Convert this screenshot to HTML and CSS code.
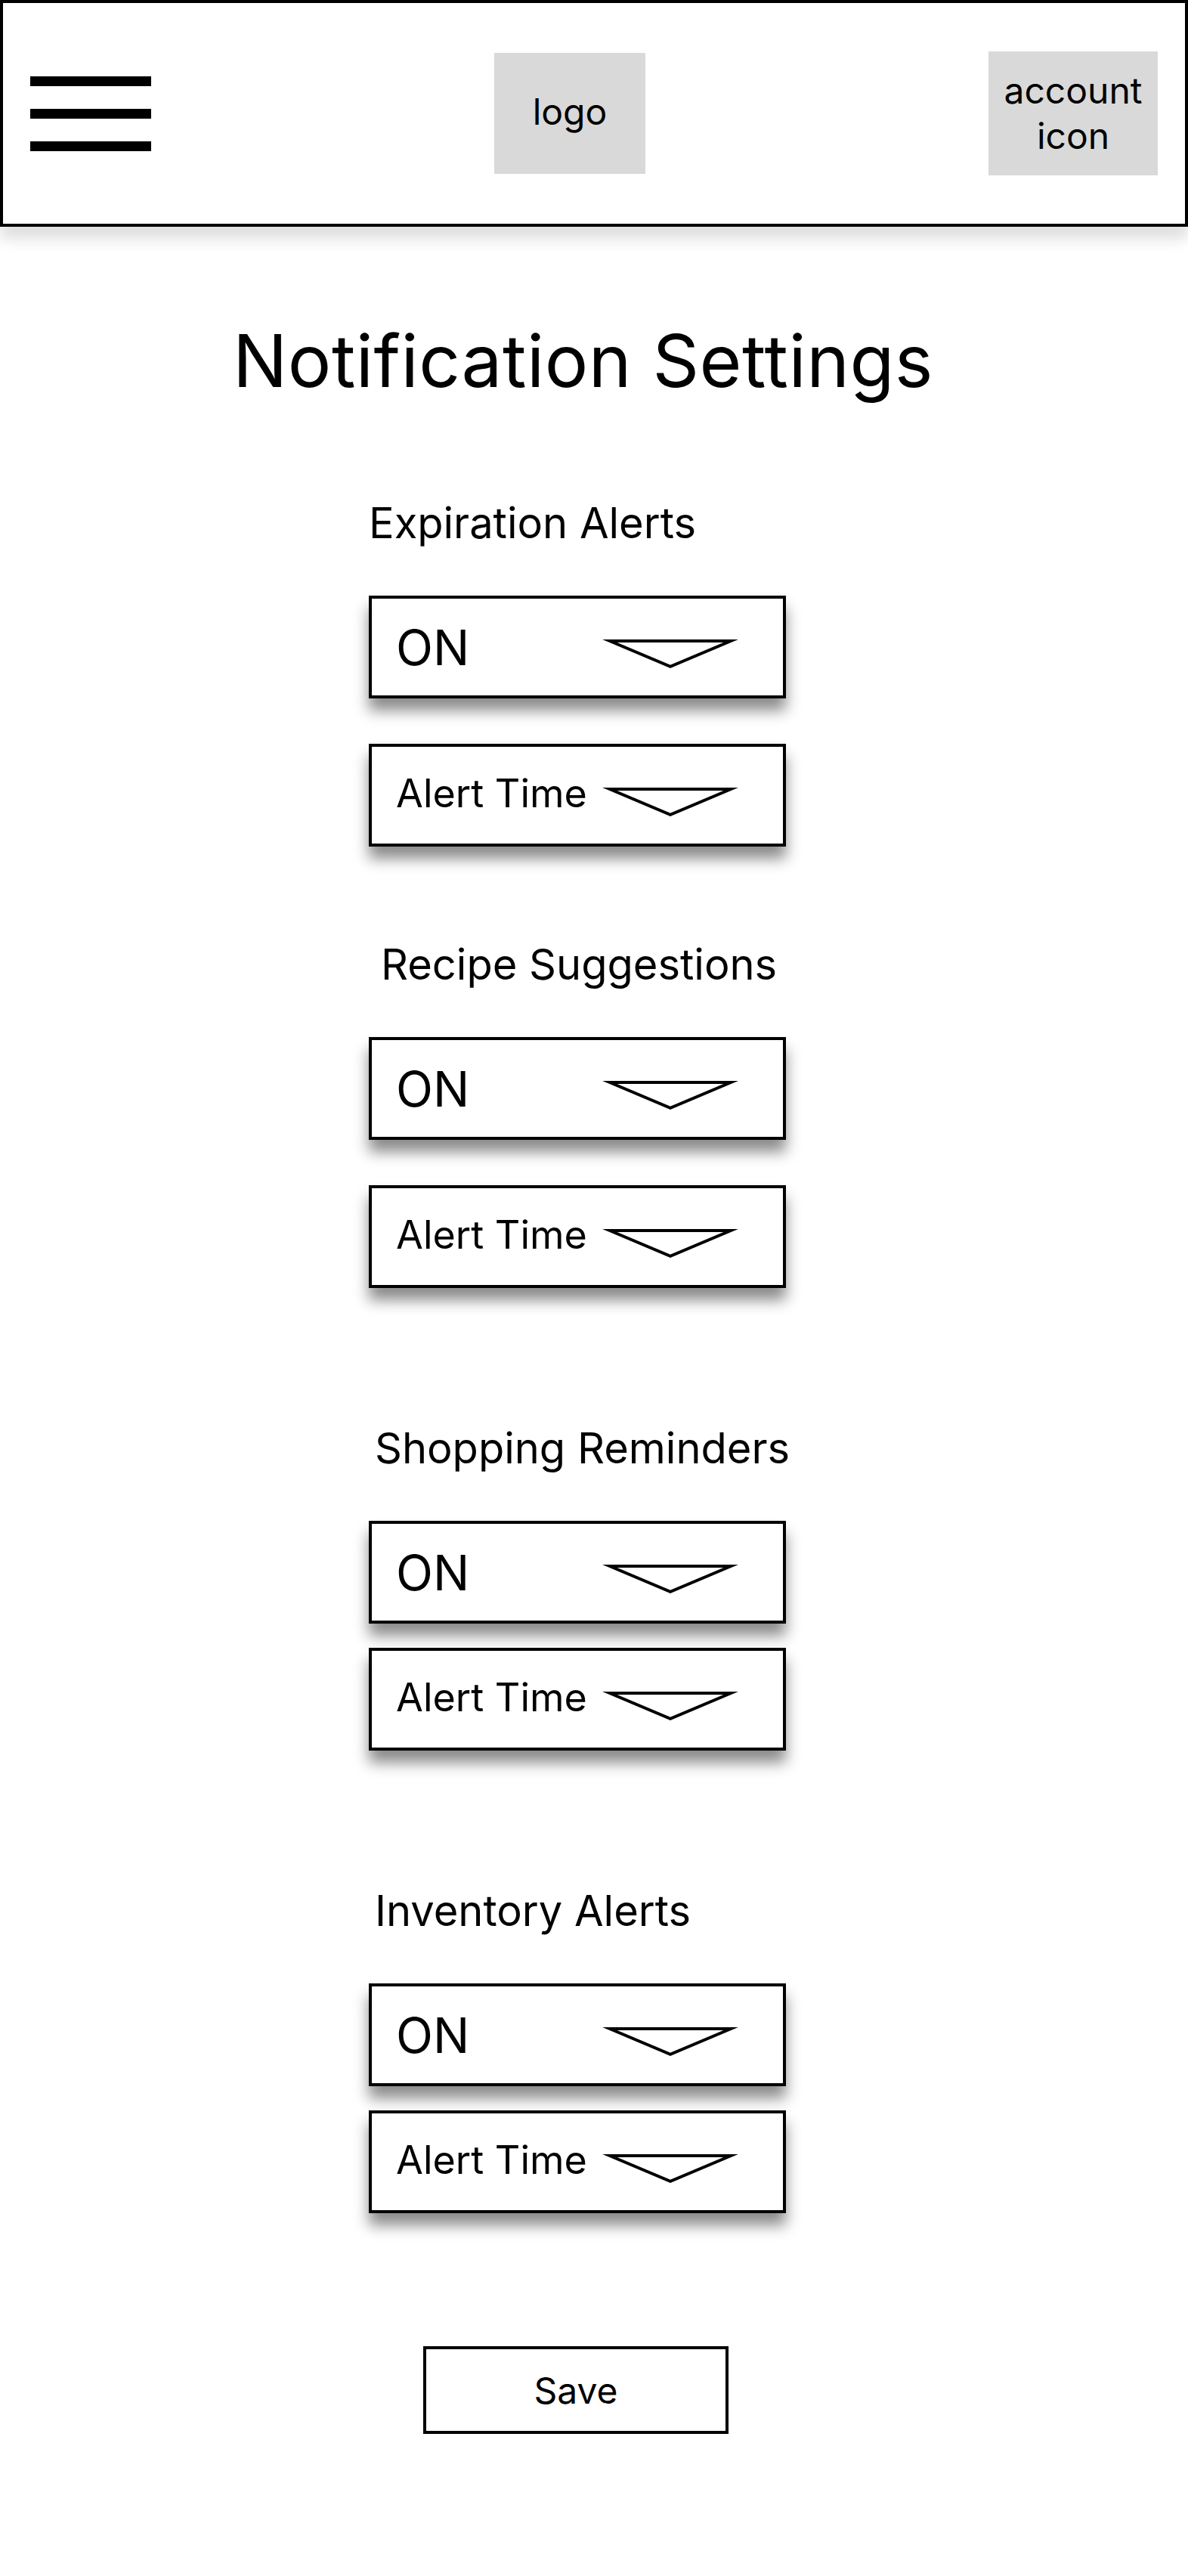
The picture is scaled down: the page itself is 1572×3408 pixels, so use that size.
FILE: index.html
```html
<!DOCTYPE html>
<html lang="en">
<head>
<meta charset="UTF-8" />
<meta name="viewport" content="width=device-width, initial-scale=1" />
<title>Notification Settings</title>
<link rel="stylesheet" href="styles.css">
</head>
<body>

<header class="topbar">
  <div class="burger"><span></span><span></span><span></span></div>
  <div class="logo">logo</div>
  <div class="account">account<br>icon</div>
</header>

<h1 class="page-title">Notification Settings</h1>

<main class="settings">
  <section class="group group-expiration">
    <h2 class="group-label">Expiration Alerts</h2>
    <div class="dropdown">
      <span class="value-on">ON</span>
      <svg class="caret" viewBox="0 0 180 38"><polygon points="10,2 170,2 90,35.8" /></svg>
    </div>
    <div class="dropdown">
      <span class="value-time">Alert Time</span>
      <svg class="caret" viewBox="0 0 180 38"><polygon points="10,2 170,2 90,35.8" /></svg>
    </div>
  </section>

  <section class="group group-recipe">
    <h2 class="group-label">Recipe Suggestions</h2>
    <div class="dropdown">
      <span class="value-on">ON</span>
      <svg class="caret" viewBox="0 0 180 38"><polygon points="10,2 170,2 90,35.8" /></svg>
    </div>
    <div class="dropdown">
      <span class="value-time">Alert Time</span>
      <svg class="caret" viewBox="0 0 180 38"><polygon points="10,2 170,2 90,35.8" /></svg>
    </div>
  </section>

  <section class="group group-shopping tight">
    <h2 class="group-label">Shopping Reminders</h2>
    <div class="dropdown">
      <span class="value-on">ON</span>
      <svg class="caret" viewBox="0 0 180 38"><polygon points="10,2 170,2 90,35.8" /></svg>
    </div>
    <div class="dropdown">
      <span class="value-time">Alert Time</span>
      <svg class="caret" viewBox="0 0 180 38"><polygon points="10,2 170,2 90,35.8" /></svg>
    </div>
  </section>

  <section class="group group-inventory tight">
    <h2 class="group-label">Inventory Alerts</h2>
    <div class="dropdown">
      <span class="value-on">ON</span>
      <svg class="caret" viewBox="0 0 180 38"><polygon points="10,2 170,2 90,35.8" /></svg>
    </div>
    <div class="dropdown">
      <span class="value-time">Alert Time</span>
      <svg class="caret" viewBox="0 0 180 38"><polygon points="10,2 170,2 90,35.8" /></svg>
    </div>
  </section>

  <button class="save-btn">Save</button>
</main>

</body>
</html>
```
FILE: styles.css
```css
* {
  box-sizing: border-box;
}
body {
  margin: 0;
  background: #fff;
  color: #000;
  font-family: Inter, "Liberation Sans", sans-serif;
  font-optical-sizing: none;
}

/* header */
.topbar {
  height: 300px;
  display: flex;
  align-items: center;
  justify-content: space-between;
  padding: 0 36px;
  border: 4px solid #000;
  box-shadow: 0 16px 18px rgba(0,0,0,0.13);
}
.burger {
  width: 160px;
  display: flex;
  flex-direction: column;
  gap: 30px;
}
.burger span {
  height: 13px;
  background: #000;
}
.logo, .account {
  display: flex;
  align-items: center;
  justify-content: center;
  text-align: center;
  background: #d9d9d9;
  font-size: 48px;
  line-height: 60px;
}
.logo {
  width: 200px;
  height: 160px;
  padding-bottom: 4px;
}
.account {
  width: 224px;
  height: 164px;
  padding-bottom: 1px;
}

/* title */
.page-title {
  margin: 119px 0 0 308px;
  font-size: 96px;
  line-height: 116px;
  font-weight: 400;
  letter-spacing: 0.5px;
  white-space: nowrap;
}

/* settings groups */
.settings {
  width: 552px;
  margin-left: 488px;
  padding-top: 123px;
}
.group {
  margin-bottom: 178px;
}
.group-expiration {
  margin-bottom: 122px;
}
.group-inventory {
  margin-bottom: 176px;
}
.group-label {
  margin: 0 0 62px;
  font-size: 56px;
  line-height: 68px;
  font-weight: 400;
  white-space: nowrap;
}
.group-recipe .group-label { margin-left: 16px; }
.group-shopping .group-label,
.group-inventory .group-label { margin-left: 8px; }

.dropdown {
  height: 136px;
  display: flex;
  align-items: center;
  justify-content: space-between;
  padding: 0 59px 0 32px;
  background: #fff;
  border: 4px solid #000;
  box-shadow: 0 16px 18px rgba(0,0,0,0.46);
}
.dropdown + .dropdown {
  margin-top: 60px;
}
.tight .dropdown + .dropdown {
  margin-top: 32px;
}
.value-on {
  font-size: 64px;
}
.value-time {
  margin-bottom: 6px;
  font-size: 52px;
  white-space: nowrap;
}
.caret {
  width: 180px;
  height: 38px;
  margin-top: 18px;
  flex-shrink: 0;
}
.caret polygon {
  fill: #fff;
  stroke: #000;
  stroke-width: 4;
  stroke-miterlimit: 8;
}

.save-btn {
  display: block;
  width: 404px;
  height: 116px;
  margin-left: 72px;
  background: #fff;
  border: 4px solid #000;
  color: #000;
  font-family: inherit;
  font-size: 48px;
}
```
